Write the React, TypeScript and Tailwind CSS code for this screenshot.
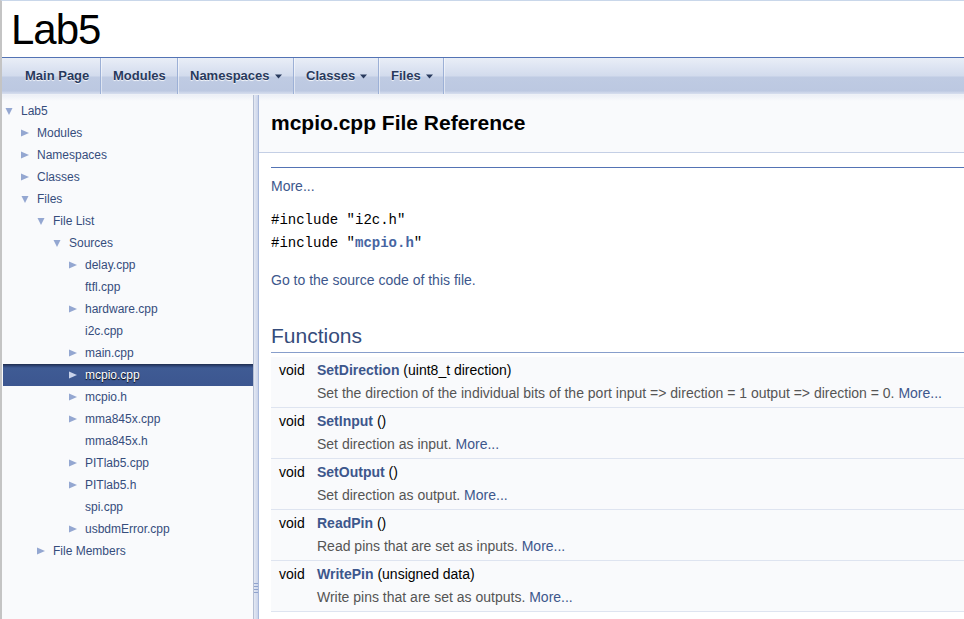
import React from "react";

const Right = ({ light }: { light?: boolean }) => (
  <svg width="8" height="8" viewBox="0 0 8 8" className="shrink-0">
    <polygon points="0,0.5 8,4 0,7.5" fill={light ? "#c9d3ea" : "#94a7d1"} />
  </svg>
);
const Down = () => (
  <svg width="8" height="8" viewBox="0 0 8 8" className="shrink-0">
    <polygon points="0.5,1 7.5,1 4,8" fill="#94a7d1" />
  </svg>
);
const Caret = () => (
  <svg width="7" height="5" viewBox="0 0 7 5" className="ml-[5px] inline-block">
    <polygon points="0,0.5 7,0.5 3.5,4.5" fill="#283a5d" />
  </svg>
);

type Node = { label: string; level: number; arrow?: "r" | "d"; selected?: boolean };
const tree: Node[] = [
  { label: "Lab5", level: 0, arrow: "d" },
  { label: "Modules", level: 1, arrow: "r" },
  { label: "Namespaces", level: 1, arrow: "r" },
  { label: "Classes", level: 1, arrow: "r" },
  { label: "Files", level: 1, arrow: "d" },
  { label: "File List", level: 2, arrow: "d" },
  { label: "Sources", level: 3, arrow: "d" },
  { label: "delay.cpp", level: 4, arrow: "r" },
  { label: "ftfl.cpp", level: 4 },
  { label: "hardware.cpp", level: 4, arrow: "r" },
  { label: "i2c.cpp", level: 4 },
  { label: "main.cpp", level: 4, arrow: "r" },
  { label: "mcpio.cpp", level: 4, arrow: "r", selected: true },
  { label: "mcpio.h", level: 4, arrow: "r" },
  { label: "mma845x.cpp", level: 4, arrow: "r" },
  { label: "mma845x.h", level: 4 },
  { label: "PITlab5.cpp", level: 4, arrow: "r" },
  { label: "PITlab5.h", level: 4, arrow: "r" },
  { label: "spi.cpp", level: 4 },
  { label: "usbdmError.cpp", level: 4, arrow: "r" },
  { label: "File Members", level: 2, arrow: "r" },
];

const pad = ["pl-[2px]", "pl-[18px]", "pl-[34px]", "pl-[50px]", "pl-[66px]"];

type Fn = { name: string; args: string; desc: string };
const fns: Fn[] = [
  {
    name: "SetDirection",
    args: "(uint8_t direction)",
    desc: "Set the direction of the individual bits of the port input => direction = 1 output => direction = 0.",
  },
  { name: "SetInput", args: "()", desc: "Set direction as input." },
  { name: "SetOutput", args: "()", desc: "Set direction as output." },
  { name: "ReadPin", args: "()", desc: "Read pins that are set as inputs." },
  { name: "WritePin", args: "(unsigned data)", desc: "Write pins that are set as outputs." },
];

const tabs: { label: string; caret?: boolean; w: string }[] = [
  { label: "Main Page", w: "w-[88px]" },
  { label: "Modules", w: "w-[77px]" },
  { label: "Namespaces", caret: true, w: "w-[116px]" },
  { label: "Classes", caret: true, w: "w-[85px]" },
  { label: "Files", caret: true, w: "w-[65px]" },
];

export default function App() {
  return (
    <div className="h-[619px] w-[964px] overflow-hidden flex flex-col bg-white border-l-2 border-l-[#c4c4c4] border-t border-t-[#c9d7ea] font-['Liberation_Sans',Arial,sans-serif]">
      {/* Title */}
      <div className="h-[56px] shrink-0 flex items-center pl-[9px]">
        <span className="text-[42px] leading-none tracking-[-1px] text-black mt-[2px]">Lab5</span>
      </div>

      {/* Nav tabs */}
      <div className="h-[37px] shrink-0 border-t border-t-[#5373b4] bg-[linear-gradient(180deg,#e9eef7_0px,#d2dbed_18px,#bfcbe3_19px,#bcc8e1_33px,#c9d3e8_34px,#d6deee_36px)] flex pl-[11px]">
        {tabs.map((t) => (
          <div
            key={t.label}
            className={`${t.w} h-full flex items-center pl-[12px] border-r border-r-[#9cb0d6] shadow-[1px_0_0_rgba(255,255,255,0.5)] text-[13px] font-bold text-[#283a5d] whitespace-nowrap [text-shadow:0_1px_1px_rgba(255,255,255,0.9)]`}
          >
            {t.label}
            {t.caret && <Caret />}
          </div>
        ))}
      </div>

      {/* Main */}
      <div className="flex-1 flex min-h-0 border-t border-t-[#eef1f7]">
        {/* Sidebar */}
        <div className="w-[251px] shrink-0 bg-[linear-gradient(180deg,#eceff6_0px,#f9fafc_6px)] pt-[5px] pl-[1px]">
          {tree.map((n) => (
            <div
              key={n.label}
              className={`h-[22px] flex items-center text-[12px] ${pad[n.level]} ${
                n.selected
                  ? "bg-[linear-gradient(180deg,#1f2d4c_0px,#2f4578_2px,#3f5b94_4px,#3c5690_22px)] text-white [text-shadow:0_1px_1px_rgba(0,0,0,1)]"
                  : "text-[#364d7c]"
              }`}
            >
              <span className="w-[16px] shrink-0 flex items-center">
                {n.arrow === "r" && <Right light={n.selected} />}
                {n.arrow === "d" && <Down />}
              </span>
              <span>{n.label}</span>
            </div>
          ))}
        </div>

        {/* Splitter */}
        <div className="w-[6px] shrink-0 bg-[linear-gradient(to_right,#b5bfd4_0px,#b5bfd4_1px,#e3e8f3_1px,#cbd4ea_5px,#a9b9db_5px)] flex flex-col justify-end pb-[24px] items-center">
          <div className="w-[4px] h-[12px] bg-[repeating-linear-gradient(180deg,#8fa2cc_0px,#8fa2cc_1px,transparent_1px,transparent_3px)]" />
        </div>

        {/* Content */}
        <div className="flex-1 min-w-0">
          <div className="h-[58px] bg-[linear-gradient(180deg,#eceff6_0px,#f9fafc_6px)] border-b border-b-[#c4cfe5] flex items-center pl-[12px]">
            <h1 className="text-[21px] font-bold text-black mt-[-2px]">mcpio.cpp File Reference</h1>
          </div>
          <div className="pl-[12px]">
            <div className="mt-[14px] h-px bg-[#5373b4]" />
            <div className="mt-[9px] leading-[18px] text-[14px] text-[#3d578c]">More...</div>
            <div className="mt-[14px] font-['Liberation_Mono','Courier_New',monospace] text-[14px] leading-[23px] text-black">
              <div>#include "i2c.h"</div>
              <div>
                #include "<span className="text-[#4665a2] font-bold">mcpio.h</span>"
              </div>
            </div>
            <div className="mt-[16px] leading-[18px] text-[14px] text-[#3d578c]">Go to the source code of this file.</div>
            <h2 className="mt-[33px] text-[21px] leading-[28px] pb-[2px] text-[#354c7b] border-b border-b-[#879ecb]">
              Functions
            </h2>
            <div className="mt-[4px]">
              {fns.map((f) => (
                <div key={f.name} className="bg-[#f9fafc] border-b border-b-[#dee4f0] pt-[3px] pb-[4px] pl-[8px] text-[14px] whitespace-nowrap">
                  <div className="flex h-[20px] leading-[20px]">
                    <span className="w-[38px] shrink-0 text-black">void</span>
                    <span className="text-black">
                      <span className="font-bold text-[#3d578c]">{f.name}</span> {f.args}
                    </span>
                  </div>
                  <div className="mt-[3px] h-[20px] leading-[20px] pl-[38px] text-[#555555]">
                    {f.desc} <span className="text-[#3d578c]">More...</span>
                  </div>
                </div>
              ))}
            </div>
          </div>
        </div>
      </div>
    </div>
  );
}
